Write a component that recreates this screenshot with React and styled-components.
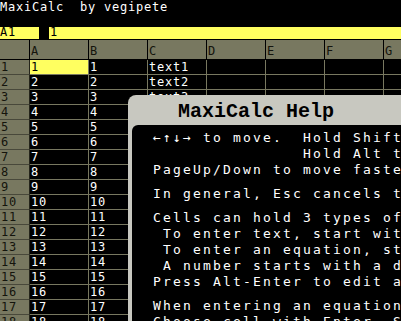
import React from "react";
import styled, { createGlobalStyle } from "styled-components";

const OLIVE = "#787860";
const YELLOW = "#ffff60";

const Global = createGlobalStyle`
  *, *::before, *::after { box-sizing: border-box; }
  html, body { margin: 0; padding: 0; background: #000; }
`;

const Screen = styled.div`
  position: relative;
  width: 401px;
  height: 321px;
  overflow: hidden;
  background: #000;
  color: #fff;
  font-family: "DejaVu Sans Mono", monospace;
  font-size: 12px;
  letter-spacing: 0.78px;
`;

const TitleBar = styled.div`
  height: 27px;
  line-height: 14px;
  white-space: pre;
`;

const EditBar = styled.div`
  display: flex;
  gap: 10px;
  height: 12px;
  margin-bottom: 1px;
  line-height: 11px;
  color: #000;
`;

const CellRef = styled.div`
  width: 39px;
  background: ${YELLOW};
`;

const EditField = styled.div`
  flex: 1;
  background: ${YELLOW};
  padding-left: 1px;
`;

const GridRow = styled.div`
  display: flex;
  width: max-content;
`;

const HeaderCell = styled.div`
  flex: none;
  width: ${(p) => (p.$corner ? 30 : 59)}px;
  height: 20px;
  display: flex;
  align-items: flex-end;
  padding-left: 1px;
  line-height: 16px;
  background: ${OLIVE};
  color: #14140c;
  border-right: 1px solid #000;
  border-bottom: 1px solid #000;
`;

const RowNum = styled.div`
  flex: none;
  width: 30px;
  height: 15px;
  padding-left: 1px;
  line-height: 15px;
  overflow: hidden;
  background: ${OLIVE};
  color: #14140c;
  border-right: 1px solid #24241a;
  border-bottom: 1px solid #48483a;
`;

const Cell = styled.div`
  flex: none;
  width: 59px;
  height: 15px;
  padding-left: 1px;
  line-height: 15px;
  overflow: hidden;
  white-space: pre;
  background: ${(p) => (p.$selected ? YELLOW : "#000")};
  color: ${(p) => (p.$selected ? "#000" : "#fff")};
  border-right: 1px solid ${OLIVE};
  border-bottom: 1px solid ${OLIVE};
`;

const HelpDialog = styled.div`
  position: absolute;
  left: 128px;
  top: 95px;
  width: 320px;
  height: 260px;
  display: flex;
  flex-direction: column;
  background: #c8c8c0;
  border-top-left-radius: 8px;
`;

const HelpTitle = styled.div`
  height: 30px;
  padding: 3px 0 0 50px;
  font-family: "Liberation Mono", "DejaVu Sans Mono", monospace;
  font-weight: bold;
  font-size: 20px;
  line-height: 27px;
  letter-spacing: 0;
  color: #000;
  white-space: pre;
`;

const HelpBody = styled.div`
  flex: 1;
  margin-left: 4px;
  padding: 5px 0 0 21px;
  background: #000;
  border-top-left-radius: 6px;
  font-size: 13px;
  letter-spacing: 2.174px;
  line-height: 16px;
  white-space: pre;
  color: #fff;
`;

const Para = styled.div`
  margin-bottom: 8px;
`;

const columns = ["A", "B", "C", "D", "E", "F", "G"];
const rows = Array.from({ length: 18 }, (_, i) => i + 1);

const help = [
  [
    "←↑↓→ to move.  Hold Shift to select a range.",
    "               Hold Alt to scroll the view.",
    "PageUp/Down to move faster.",
  ],
  ["In general, Esc cancels the current operation."],
  [
    "Cells can hold 3 types of data:",
    " To enter text, start with a quote.",
    " To enter an equation, start with =.",
    " A number starts with a digit.",
    "Press Alt-Enter to edit a cell.",
  ],
  ["When entering an equation,", "Choose cell with Enter. Select with arrows."],
];

export default function App() {
  return (
    <>
      <Global />
      <Screen>
        <TitleBar>MaxiCalc  by vegipete</TitleBar>
        <EditBar>
          <CellRef>A1</CellRef>
          <EditField>1</EditField>
        </EditBar>
        <GridRow>
          <HeaderCell $corner />
          {columns.map((c) => (
            <HeaderCell key={c}>{c}</HeaderCell>
          ))}
        </GridRow>
        {rows.map((r) => (
          <GridRow key={r}>
            <RowNum>{r}</RowNum>
            <Cell $selected={r === 1}>{r}</Cell>
            <Cell>{r}</Cell>
            <Cell>{`text${r}`}</Cell>
            <Cell />
            <Cell />
            <Cell />
            <Cell />
          </GridRow>
        ))}
        <HelpDialog>
          <HelpTitle>MaxiCalc Help</HelpTitle>
          <HelpBody>
            {help.map((p, i) => (
              <Para key={i}>
                {p.map((l, j) => (
                  <div key={j}>{l}</div>
                ))}
              </Para>
            ))}
          </HelpBody>
        </HelpDialog>
      </Screen>
    </>
  );
}
